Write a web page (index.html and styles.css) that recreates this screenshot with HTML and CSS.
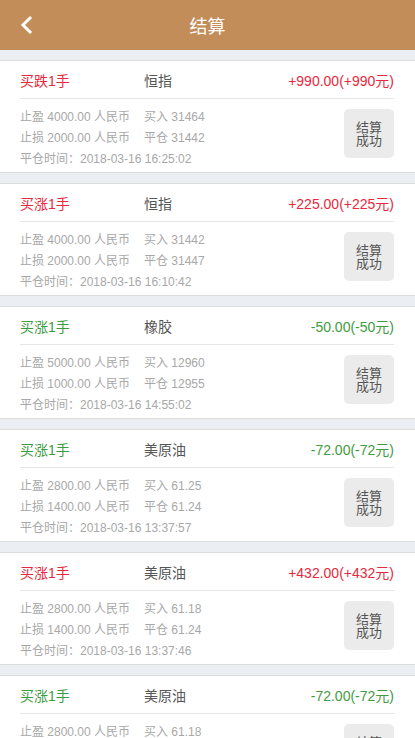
FILE: index.html
```html
<!DOCTYPE html>
<html lang="zh-CN">
<head>
<meta charset="utf-8">
<title>结算</title>
<link rel="stylesheet" href="styles.css">
</head>
<body>
<header class="topbar">
  <svg class="back" width="14" height="20" viewBox="0 0 14 20"><polyline points="10,3 3,10 10,17" fill="none" stroke="#fff" stroke-width="3" stroke-linecap="square"/></svg>
  <h1 class="title">结算</h1>
</header>
<main class="list">
  <section class="card">
    <div class="head"><span class="side red">买跌1手</span><span class="name">恒指</span><span class="amount red">+990.00(+990元)</span></div>
    <div class="body">
      <div class="info">
        <div class="line"><span class="col">止盈 4000.00 人民币</span><span>买入 31464</span></div>
        <div class="line"><span class="col">止损 2000.00 人民币</span><span>平仓 31442</span></div>
        <div class="line">平仓时间：2018-03-16 16:25:02</div>
      </div>
      <div class="status">结算成功</div>
    </div>
  </section>
  <section class="card">
    <div class="head"><span class="side red">买涨1手</span><span class="name">恒指</span><span class="amount red">+225.00(+225元)</span></div>
    <div class="body">
      <div class="info">
        <div class="line"><span class="col">止盈 4000.00 人民币</span><span>买入 31442</span></div>
        <div class="line"><span class="col">止损 2000.00 人民币</span><span>平仓 31447</span></div>
        <div class="line">平仓时间：2018-03-16 16:10:42</div>
      </div>
      <div class="status">结算成功</div>
    </div>
  </section>
  <section class="card">
    <div class="head"><span class="side green">买涨1手</span><span class="name">橡胶</span><span class="amount green">-50.00(-50元)</span></div>
    <div class="body">
      <div class="info">
        <div class="line"><span class="col">止盈 5000.00 人民币</span><span>买入 12960</span></div>
        <div class="line"><span class="col">止损 1000.00 人民币</span><span>平仓 12955</span></div>
        <div class="line">平仓时间：2018-03-16 14:55:02</div>
      </div>
      <div class="status">结算成功</div>
    </div>
  </section>
  <section class="card">
    <div class="head"><span class="side green">买涨1手</span><span class="name">美原油</span><span class="amount green">-72.00(-72元)</span></div>
    <div class="body">
      <div class="info">
        <div class="line"><span class="col">止盈 2800.00 人民币</span><span>买入 61.25</span></div>
        <div class="line"><span class="col">止损 1400.00 人民币</span><span>平仓 61.24</span></div>
        <div class="line">平仓时间：2018-03-16 13:37:57</div>
      </div>
      <div class="status">结算成功</div>
    </div>
  </section>
  <section class="card">
    <div class="head"><span class="side red">买涨1手</span><span class="name">美原油</span><span class="amount red">+432.00(+432元)</span></div>
    <div class="body">
      <div class="info">
        <div class="line"><span class="col">止盈 2800.00 人民币</span><span>买入 61.18</span></div>
        <div class="line"><span class="col">止损 1400.00 人民币</span><span>平仓 61.24</span></div>
        <div class="line">平仓时间：2018-03-16 13:37:46</div>
      </div>
      <div class="status">结算成功</div>
    </div>
  </section>
  <section class="card">
    <div class="head"><span class="side green">买涨1手</span><span class="name">美原油</span><span class="amount green">-72.00(-72元)</span></div>
    <div class="body">
      <div class="info">
        <div class="line"><span class="col">止盈 2800.00 人民币</span><span>买入 61.18</span></div>
        <div class="line"><span class="col">止损 1400.00 人民币</span><span>平仓 61.24</span></div>
        <div class="line">平仓时间：2018-03-16 13:37:40</div>
      </div>
      <div class="status">结算成功</div>
    </div>
  </section>
</main>
</body>
</html>
```
FILE: styles.css
```css
* { box-sizing: border-box; }
html, body {
  margin: 0;
  padding: 0;
  background: #ebeef3;
  font-family: "Liberation Sans", "Noto Sans CJK SC", sans-serif;
}
.topbar {
  height: 50px;
  background: #c28d58;
  display: flex;
  align-items: center;
  justify-content: center;
  position: relative;
}
.back {
  position: absolute;
  left: 20px;
  top: 15px;
}
.title {
  margin: 0;
  font-size: 18px;
  font-weight: normal;
  color: #fff;
}
.list {
  padding-top: 10px;
}
.card {
  background: #fff;
  border-top: 1px solid #dcdcdc;
  border-bottom: 1px solid #dcdcdc;
  margin-bottom: 10px;
  padding: 0 21px 0 20px;
}
.head {
  height: 38px;
  display: flex;
  align-items: center;
  border-bottom: 1px solid #e6e6e6;
  font-size: 14px;
}
.side { width: 124px; }
.name { flex: 1; color: #555; }
.amount { text-align: right; }
.red { color: #e8283c; }
.green { color: #3f9b3f; }
.body {
  display: flex;
  justify-content: space-between;
  align-items: flex-start;
  padding: 8px 0 2px;
}
.info {
  font-size: 12px;
  line-height: 21px;
  color: #a8a8a8;
}
.col {
  display: inline-block;
  width: 124px;
}
.status {
  margin-top: 2px;
  width: 50px;
  height: 49px;
  border-radius: 5px;
  background: #ebebeb;
  color: #555;
  font-size: 13px;
  line-height: 13px;
  padding: 0 12px;
  display: flex;
  align-items: center;
  justify-content: center;
  text-align: center;
}
```
